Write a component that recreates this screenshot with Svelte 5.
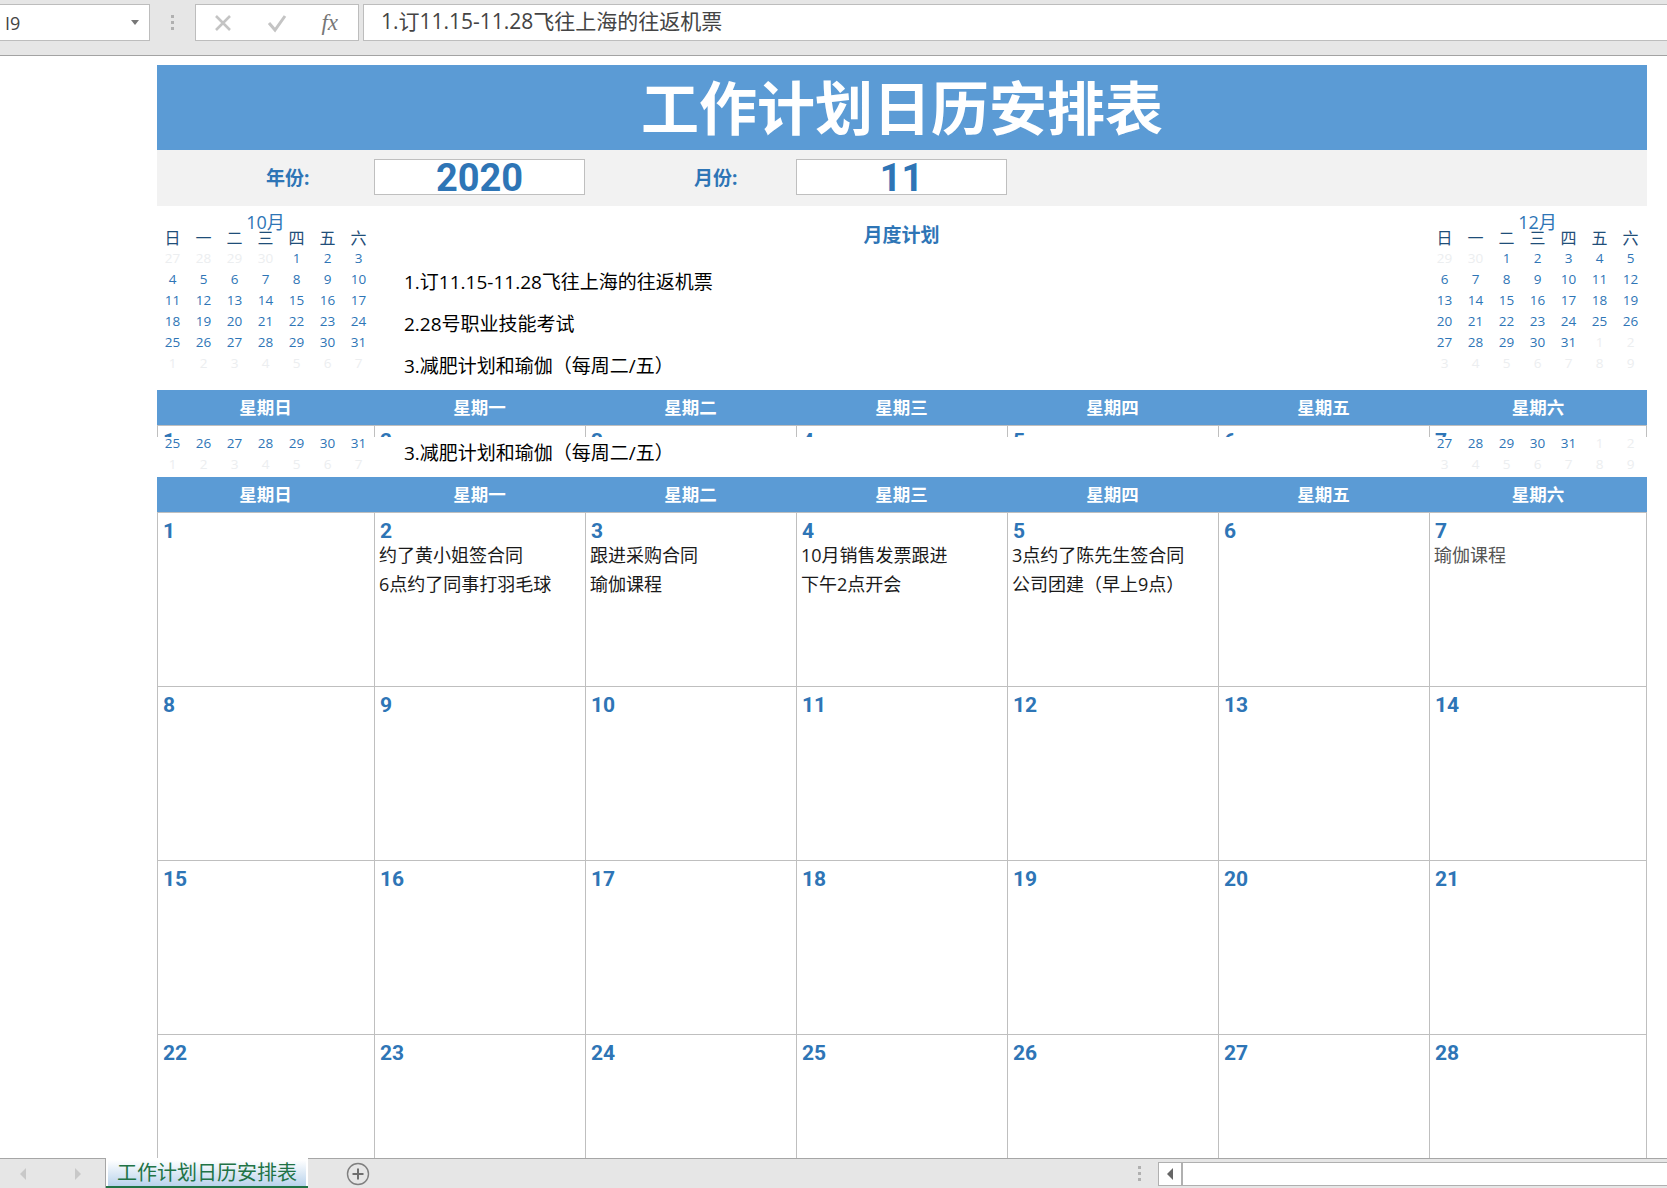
<script lang="ts">
// Mini month grids are always 6 rows of 7; muted days belong to the neighbouring month
function monthDays(lead: number[], count: number, tail: number) {
  const days = lead.map((d) => ({ d, muted: true }));
  for (let d = 1; d <= count; d++) days.push({ d, muted: false });
  for (let d = 1; d <= tail; d++) days.push({ d, muted: true });
  return days;
}

const october = monthDays([27, 28, 29, 30], 31, 7);
const december = monthDays([29, 30], 31, 9);
const miniHead = ['日', '一', '二', '三', '四', '五', '六'];
const weekdays = ['星期日', '星期一', '星期二', '星期三', '星期四', '星期五', '星期六'];

const plans = [
  '1.订11.15-11.28飞往上海的往返机票',
  '2.28号职业技能考试',
  '3.减肥计划和瑜伽（每周二/五）',
];

const events: Record<number, string[]> = {
  2: ['约了黄小姐签合同', '6点约了同事打羽毛球'],
  3: ['跟进采购合同', '瑜伽课程'],
  4: ['10月销售发票跟进', '下午2点开会'],
  5: ['3点约了陈先生签合同', '公司团建（早上9点）'],
  7: ['瑜伽课程'],
};

const firstWeek = [1, 2, 3, 4, 5, 6, 7];
const dates = Array.from({ length: 28 }, (_, i) => i + 1);
</script>

{#snippet mini(days, title)}
  <div class="mini">
    <div class="mini-title">{title}</div>
    {#each miniHead as h}
      <div class="mini-head">{h}</div>
    {/each}
    {#each days as day}
      <div class="mini-day" class:muted={day.muted}>{day.d}</div>
    {/each}
  </div>
{/snippet}

{#snippet ghostMini(days)}
  <div class="mini ghost-mini">
    {#each days.slice(-14) as day}
      <div class="mini-day" class:muted={day.muted}>{day.d}</div>
    {/each}
  </div>
{/snippet}

{#snippet weekHeader()}
  <div class="cols week-header">
    {#each weekdays as w}
      <div>{w}</div>
    {/each}
  </div>
{/snippet}

<div class="window">
  <div class="formula-bar">
    <div class="name-box">
      <span>I9</span>
      <i class="caret"></i>
    </div>
    <div class="vdots"><i></i><i></i><i></i></div>
    <div class="fx-group">
      <svg width="20" height="20" viewBox="0 0 20 20"><path d="M3 3 L17 17 M17 3 L3 17" stroke="#c4c4c4" stroke-width="2.6" fill="none" /></svg>
      <svg width="22" height="20" viewBox="0 0 22 20"><path d="M3 10 L9 17 L19 3" stroke="#c4c4c4" stroke-width="3" fill="none" /></svg>
      <span class="fx">fx</span>
    </div>
    <div class="formula-input">{plans[0]}</div>
  </div>

  <div class="sheet">
    <div class="title">工作计划日历安排表</div>

    <div class="cols filter">
      <div class="filter-label">年份:</div>
      <div class="filter-box">2020</div>
      <div class="filter-label">月份:</div>
      <div class="filter-box">11</div>
    </div>

    <div class="cols overview">
      {@render mini(october, '10月')}
      <div class="plan">
        <div class="plan-title">月度计划</div>
        {#each plans as p}
          <div class="plan-line">{p}</div>
        {/each}
      </div>
      {@render mini(december, '12月')}
    </div>

    {@render weekHeader()}

    <!-- redraw leftovers: the first row gets cut off right under the header -->
    <div class="cols strip">
      {#each firstWeek as d}
        <div class="cell"><div class="num">{d}</div></div>
      {/each}
    </div>
    <div class="cols ghost">
      {@render ghostMini(october)}
      <div class="plan ghost-plan"><div class="plan-line">{plans[2]}</div></div>
      {@render ghostMini(december)}
    </div>

    {@render weekHeader()}

    <div class="cols weeks">
      {#each dates as d}
        <div class="cell">
          <div class="num">{d}</div>
          {#each events[d] ?? [] as e}
            <div class="event" class:soft={d === 7}>{e}</div>
          {/each}
        </div>
      {/each}
    </div>
  </div>

  <div class="tab-bar">
    <div class="nav">
      <svg width="10" height="14" viewBox="0 0 10 14"><path d="M8 1 L2 7 L8 13 Z" fill="#c8c8c8" /></svg>
      <svg width="10" height="14" viewBox="0 0 10 14"><path d="M2 1 L8 7 L2 13 Z" fill="#c8c8c8" /></svg>
    </div>
    <div class="tab"><span>工作计划日历安排表</span></div>
    <svg class="add" width="24" height="24" viewBox="0 0 24 24">
      <circle cx="12" cy="12" r="10.5" fill="none" stroke="#7f7f7f" stroke-width="1.4" />
      <path d="M12 6.5 V17.5 M6.5 12 H17.5" stroke="#6e6e6e" stroke-width="2" />
    </svg>
    <div class="tab-dots"><i></i><i></i><i></i></div>
    <div class="scroll">
      <div class="scroll-btn">
        <svg width="8" height="14" viewBox="0 0 8 14"><path d="M7 1 L1 7 L7 13 Z" fill="#666" /></svg>
      </div>
    </div>
  </div>
</div>

<style>
  :global(html),
  :global(body) {
    margin: 0;
    height: 100%;
    overflow: hidden;
  }

  .window {
    width: 1667px;
    height: 1188px;
    display: flex;
    flex-direction: column;
    background: #fff;
    font-family: 'Open Sans', 'Noto Sans CJK SC', sans-serif;
    color: #000;
  }

  /* formula bar */
  .formula-bar {
    height: 56px;
    flex: none;
    box-sizing: border-box;
    display: flex;
    align-items: flex-start;
    padding-top: 4px;
    background: #e6e6e6;
    border-bottom: 1px solid #a3a3a3;
    color: #444;
  }

  .name-box {
    width: 150px;
    height: 37px;
    box-sizing: border-box;
    display: flex;
    align-items: center;
    justify-content: space-between;
    padding: 0 10px 0 5px;
    background: #fff;
    border: 1px solid #bdbdbd;
    border-left: none;
    font-size: 18px;
  }

  .caret {
    border-left: 4px solid transparent;
    border-right: 4px solid transparent;
    border-top: 5px solid #777;
  }

  .vdots {
    width: 45px;
    height: 37px;
    display: flex;
    flex-direction: column;
    align-items: center;
    justify-content: center;
    gap: 3px;
  }

  .vdots i,
  .tab-dots i {
    width: 3px;
    height: 3px;
    background: #b0b0b0;
  }

  .fx-group {
    width: 164px;
    height: 37px;
    box-sizing: border-box;
    display: flex;
    align-items: center;
    justify-content: space-between;
    padding: 0 20px 0 17px;
    background: #fff;
    border: 1px solid #bdbdbd;
  }

  .fx {
    font-family: 'Liberation Serif', serif;
    font-style: italic;
    font-size: 23px;
    color: #777;
  }

  .formula-input {
    flex: 1;
    height: 37px;
    box-sizing: border-box;
    margin-left: 4px;
    padding-left: 17px;
    background: #fff;
    border: 1px solid #bdbdbd;
    border-right: none;
    font-size: 21px;
    line-height: 33px;
    white-space: nowrap;
  }

  /* worksheet */
  .sheet {
    flex: 1;
    min-height: 0;
    overflow: hidden;
    padding: 9px 0 0 157px;
  }

  .cols {
    width: 1490px;
    display: grid;
    grid-template-columns: 217px repeat(5, 211px) 218px;
  }

  .title {
    width: 1490px;
    height: 85px;
    background: #5b9bd5;
    color: #fff;
    font-size: 58px;
    font-weight: 700;
    line-height: 85px;
    text-align: center;
  }

  .filter {
    height: 56px;
    align-items: center;
    background: #f2f2f2;
    padding-bottom: 3px;
    box-sizing: border-box;
    color: #2e75b6;
  }

  .filter-label {
    font-size: 19px;
    font-weight: 700;
    padding-left: 109px;
  }

  .filter-box {
    height: 36px;
    box-sizing: border-box;
    background: #fff;
    border: 1px solid #bfbfbf;
    font-family: 'Liberation Sans Narrow', Roboto, sans-serif;
    font-size: 38px;
    font-weight: 700;
    line-height: 37px;
    text-align: center;
  }

  .overview {
    height: 184px;
  }

  .mini {
    display: grid;
    grid-template-columns: repeat(7, 31px);
    grid-auto-rows: 21px;
    text-align: center;
    align-content: start;
  }

  .mini-title {
    grid-column: 1 / -1;
    height: 32px;
    font-size: 18px;
    line-height: 32px;
    color: #2e75b6;
  }

  .mini-head {
    height: 23px;
    font-size: 16px;
    line-height: 23px;
    color: #1f4e79;
  }

  .mini-day {
    font-size: 13.5px;
    line-height: 21px;
    color: #2e75b6;
  }

  .mini-day.muted {
    color: #eceef0;
  }

  .mini-title,
  .mini-head {
    grid-row: auto;
  }

  .plan {
    grid-column: 2 / 7;
  }

  .plan-title {
    height: 55px;
    box-sizing: border-box;
    padding-top: 12px;
    font-size: 19px;
    font-weight: 700;
    line-height: 34px;
    text-align: center;
    color: #2e75b6;
  }

  .plan-line {
    height: 42px;
    padding-left: 30px;
    font-size: 19px;
    line-height: 42px;
    white-space: nowrap;
  }

  .week-header {
    height: 35px;
    background: #5b9bd5;
    color: #fff;
    font-size: 17.5px;
    font-weight: 700;
    line-height: 34px;
    text-align: center;
  }

  .strip {
    height: 12px;
    overflow: hidden;
    border-top: 1px solid #bfbfbf;
    box-sizing: border-box;
  }

  .strip .cell {
    height: 40px;
    padding-top: 6px;
  }

  .ghost {
    height: 40px;
    overflow: hidden;
    background: #fff;
  }

  .ghost-mini {
    height: 40px;
    padding-bottom: 2px;
    box-sizing: border-box;
    align-content: end;
  }

  .ghost-plan .plan-line {
    height: 33px;
    line-height: 33px;
  }

  .weeks {
    border-top: 1px solid #bfbfbf;
    box-sizing: border-box;
  }

  .cell {
    height: 174px;
    box-sizing: border-box;
    padding: 9px 4px 0;
    border-left: 1px solid #bfbfbf;
    border-bottom: 1px solid #bfbfbf;
    overflow: hidden;
  }

  .cols .cell:nth-child(7n) {
    border-right: 1px solid #bfbfbf;
  }

  .num {
    height: 19px;
    padding-left: 1px;
    font-family: 'Liberation Sans Narrow', Roboto, sans-serif;
    font-size: 21px;
    font-weight: 700;
    line-height: 19px;
    color: #2e75b6;
  }

  .event {
    height: 29px;
    font-size: 18px;
    line-height: 29px;
    color: #1a1a1a;
    white-space: nowrap;
  }

  .event.soft {
    color: #555;
  }

  .event:first-of-type {
    margin-top: 8px;
  }

  /* sheet tabs */
  .tab-bar {
    height: 30px;
    flex: none;
    box-sizing: border-box;
    display: flex;
    align-items: stretch;
    background: #e6e6e6;
    border-top: 1px solid #a6a6a6;
  }

  .nav {
    width: 106px;
    box-sizing: border-box;
    padding: 0 22px 0 18px;
    display: flex;
    align-items: center;
    justify-content: space-between;
    border-right: 1px solid #a6a6a6;
  }

  .tab {
    width: 202px;
    box-sizing: border-box;
    margin-top: -1px;
    padding: 2px 2px 0;
    background: #fff;
    border-bottom: 2px solid #217346;
  }

  .tab span {
    display: block;
    height: 100%;
    background: linear-gradient(#fff, #b9d3ec);
    color: #217346;
    font-size: 20px;
    line-height: 25px;
    text-align: center;
  }

  .add {
    align-self: center;
    margin-left: 38px;
  }

  .tab-dots {
    width: 14px;
    margin-left: auto;
    margin-right: 12px;
    display: flex;
    flex-direction: column;
    align-items: center;
    justify-content: center;
    gap: 3px;
  }

  .scroll {
    width: 509px;
    box-sizing: border-box;
    margin-top: 3px;
    margin-bottom: 2px;
    background: #fff;
    border: 1px solid #b0b0b0;
    border-right: none;
  }

  .scroll-btn {
    width: 24px;
    height: 100%;
    box-sizing: border-box;
    display: flex;
    align-items: center;
    justify-content: center;
    border-right: 2px solid #b0b0b0;
  }
</style>
